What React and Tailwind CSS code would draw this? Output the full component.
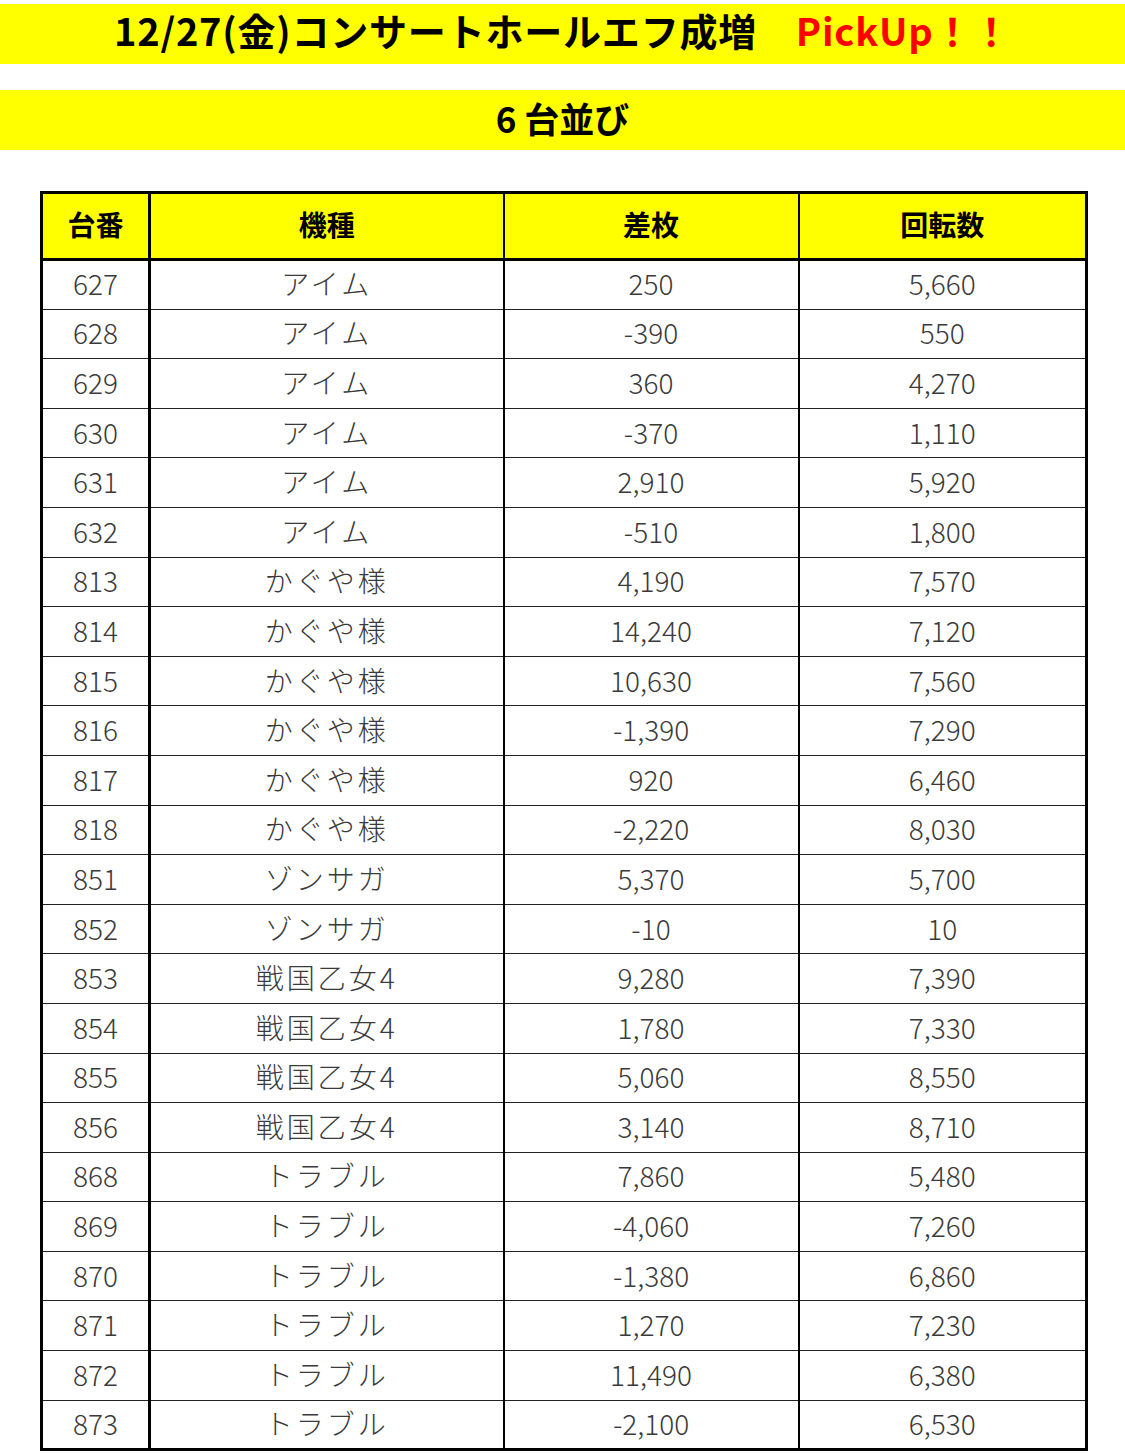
import React from "react";

const rows = [
  ["627", "アイム", "250", "5,660"],
  ["628", "アイム", "-390", "550"],
  ["629", "アイム", "360", "4,270"],
  ["630", "アイム", "-370", "1,110"],
  ["631", "アイム", "2,910", "5,920"],
  ["632", "アイム", "-510", "1,800"],
  ["813", "かぐや様", "4,190", "7,570"],
  ["814", "かぐや様", "14,240", "7,120"],
  ["815", "かぐや様", "10,630", "7,560"],
  ["816", "かぐや様", "-1,390", "7,290"],
  ["817", "かぐや様", "920", "6,460"],
  ["818", "かぐや様", "-2,220", "8,030"],
  ["851", "ゾンサガ", "5,370", "5,700"],
  ["852", "ゾンサガ", "-10", "10"],
  ["853", "戦国乙女4", "9,280", "7,390"],
  ["854", "戦国乙女4", "1,780", "7,330"],
  ["855", "戦国乙女4", "5,060", "8,550"],
  ["856", "戦国乙女4", "3,140", "8,710"],
  ["868", "トラブル", "7,860", "5,480"],
  ["869", "トラブル", "-4,060", "7,260"],
  ["870", "トラブル", "-1,380", "6,860"],
  ["871", "トラブル", "1,270", "7,230"],
  ["872", "トラブル", "11,490", "6,380"],
  ["873", "トラブル", "-2,100", "6,530"],
];

const font = { fontFamily: '"Noto Sans CJK JP", "Noto Sans", sans-serif' };

const App = () => {
  return (
    <div
      className="w-[1125px] h-[1453px] bg-white pt-[4px] overflow-hidden"
      style={font}
    >
      <div className="h-[60px] bg-[#ffff00] flex items-center justify-center pb-[8px]">
        <h1 className="text-[38px] font-bold text-black leading-none tracking-[0.8px]">
          12/27(金)コンサートホールエフ成増
          <span className="text-[#ff0000]">　PickUp！！</span>
        </h1>
      </div>
      <div className="h-[60px] mt-[26px] bg-[#ffff00] flex items-center justify-center pb-[6px]">
        <h2 className="text-[35px] font-bold text-black leading-none">
          6 台並び
        </h2>
      </div>

      <table className="mt-[41px] ml-[40px] w-[1045px] border-collapse border-[3px] border-black table-fixed">
        <colgroup>
          <col className="w-[108px]" />
          <col className="w-[354px]" />
          <col className="w-[295px]" />
          <col className="w-[288px]" />
        </colgroup>
        <thead>
          <tr className="h-[67px] bg-[#ffff00] text-[28px] font-bold text-black">
            <th className="border-[3px] border-black font-bold pb-[4px]">台番</th>
            <th className="border-2 border-black border-b-[3px] border-l-[3px] font-bold pb-[4px]">機種</th>
            <th className="border-2 border-black border-b-[3px] font-bold pb-[4px]">差枚</th>
            <th className="border-2 border-black border-b-[3px] font-bold pb-[4px]">回転数</th>
          </tr>
        </thead>
        <tbody className="text-[28px] text-[#3a3a3a] font-light">
          {rows.map((r) => (
            <tr key={r[0]} className="h-[49.6px]">
              <td className="border-black border-y border-y-[#222] border-r-[3px] text-center leading-none pb-[3px]">
                {r[0]}
              </td>
              <td className="border-y border-y-[#222] border-r-2 border-r-black text-center leading-none tracking-[3px] pb-[3px]">
                {r[1]}
              </td>
              <td className="border-y border-y-[#222] border-r-2 border-r-black text-center leading-none pb-[3px]">
                {r[2]}
              </td>
              <td className="border-y border-y-[#222] text-center leading-none pb-[3px]">
                {r[3]}
              </td>
            </tr>
          ))}
        </tbody>
      </table>
    </div>
  );
};

export default App;
